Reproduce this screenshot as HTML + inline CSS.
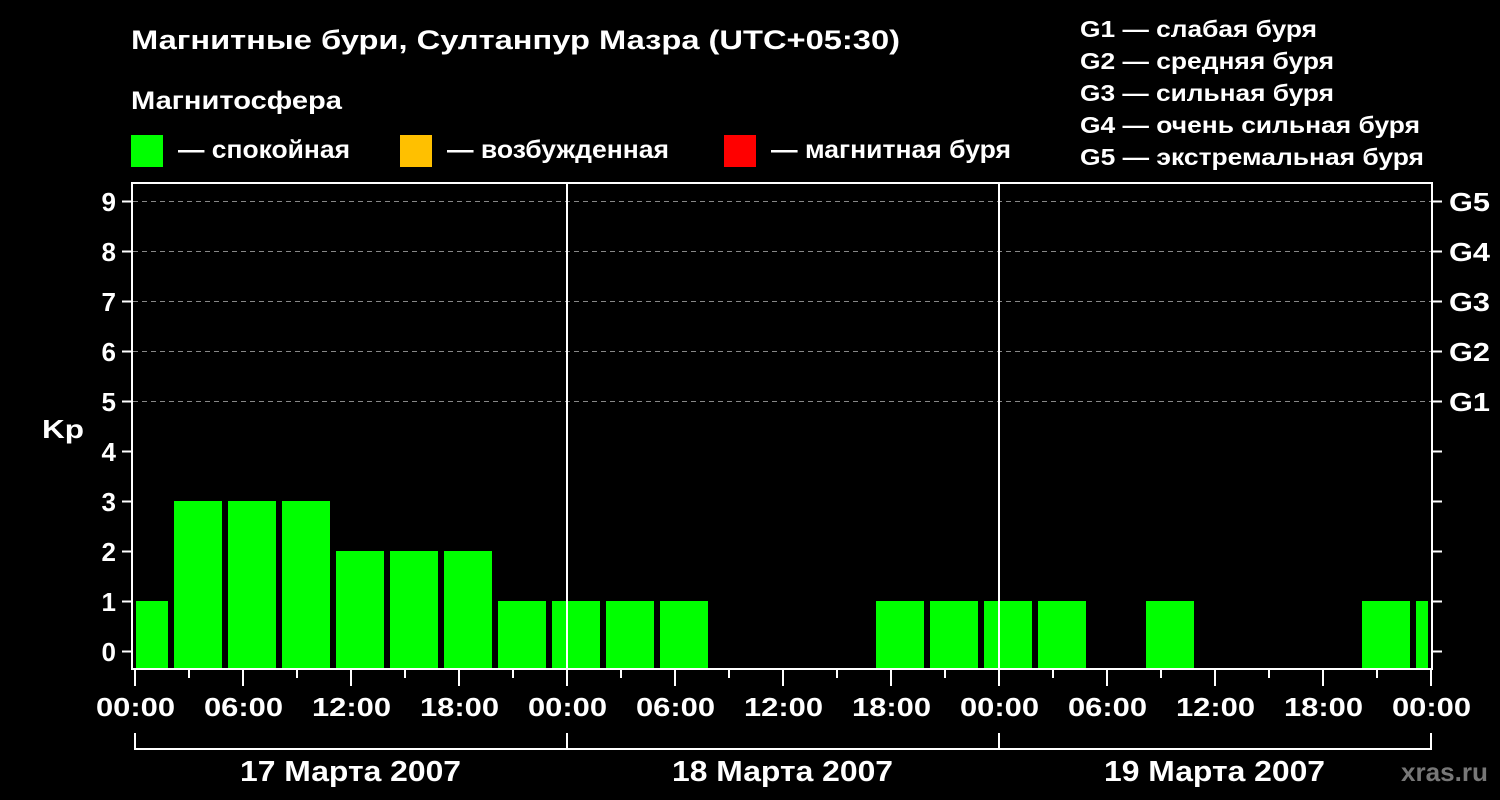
<!DOCTYPE html>
<html><head><meta charset="utf-8"><style>
body{margin:0;background:#000;width:1500px;height:800px;overflow:hidden}
svg{display:block}
text{font-family:"Liberation Sans",sans-serif;font-weight:bold;fill:#fff}
</style></head><body>
<svg width="1500" height="800" xmlns="http://www.w3.org/2000/svg">
<text x="131" y="49" font-size="27" textLength="769" lengthAdjust="spacingAndGlyphs">Магнитные бури, Султанпур Мазра (UTC+05:30)</text>
<text x="131" y="109" font-size="25" textLength="211" lengthAdjust="spacingAndGlyphs">Магнитосфера</text>
<rect x="131" y="135" width="32" height="32" fill="#00ff00"/>
<text x="178" y="158" font-size="25" textLength="172" lengthAdjust="spacingAndGlyphs">— спокойная</text>
<rect x="400" y="135" width="32" height="32" fill="#ffc000"/>
<text x="447" y="158" font-size="25" textLength="222" lengthAdjust="spacingAndGlyphs">— возбужденная</text>
<rect x="724" y="135" width="32" height="32" fill="#ff0000"/>
<text x="771" y="158" font-size="25" textLength="240" lengthAdjust="spacingAndGlyphs">— магнитная буря</text>
<g font-size="23">
<text x="1080" y="37" textLength="237" lengthAdjust="spacingAndGlyphs">G1 — слабая буря</text>
<text x="1080" y="69" textLength="254" lengthAdjust="spacingAndGlyphs">G2 — средняя буря</text>
<text x="1080" y="101" textLength="254" lengthAdjust="spacingAndGlyphs">G3 — сильная буря</text>
<text x="1080" y="133" textLength="340" lengthAdjust="spacingAndGlyphs">G4 — очень сильная буря</text>
<text x="1080" y="165" textLength="344" lengthAdjust="spacingAndGlyphs">G5 — экстремальная буря</text>
</g>
<g stroke="#888" stroke-width="1" stroke-dasharray="5,4">
<line x1="133" y1="201.5" x2="1432" y2="201.5"/>
<line x1="133" y1="251.5" x2="1432" y2="251.5"/>
<line x1="133" y1="301.5" x2="1432" y2="301.5"/>
<line x1="133" y1="351.5" x2="1432" y2="351.5"/>
<line x1="133" y1="401.5" x2="1432" y2="401.5"/>
</g>
<g fill="#00ff00">
<rect x="136" y="601" width="32" height="67"/>
<rect x="174" y="501" width="48" height="167"/>
<rect x="228" y="501" width="48" height="167"/>
<rect x="282" y="501" width="48" height="167"/>
<rect x="336" y="551" width="48" height="117"/>
<rect x="390" y="551" width="48" height="117"/>
<rect x="444" y="551" width="48" height="117"/>
<rect x="498" y="601" width="48" height="67"/>
<rect x="552" y="601" width="48" height="67"/>
<rect x="606" y="601" width="48" height="67"/>
<rect x="660" y="601" width="48" height="67"/>
<rect x="876" y="601" width="48" height="67"/>
<rect x="930" y="601" width="48" height="67"/>
<rect x="984" y="601" width="48" height="67"/>
<rect x="1038" y="601" width="48" height="67"/>
<rect x="1146" y="601" width="48" height="67"/>
<rect x="1362" y="601" width="48" height="67"/>
<rect x="1416" y="601" width="12" height="67"/>
</g>
<g stroke="#fff" stroke-width="2" fill="none">
<rect x="132" y="183" width="1300" height="486"/>
<line x1="567" y1="183" x2="567" y2="669"/>
<line x1="999" y1="183" x2="999" y2="669"/>
</g>
<g stroke="#fff" stroke-width="2">
<path d="M122 201.5h9M122 251.5h9M122 301.5h9M122 351.5h9M122 401.5h9M122 451.5h9M122 501.5h9M122 551.5h9M122 601.5h9M122 651.5h9"/>
<path d="M1433 201.5h9M1433 251.5h9M1433 301.5h9M1433 351.5h9M1433 401.5h9M1433 451.5h9M1433 501.5h9M1433 551.5h9M1433 601.5h9M1433 651.5h9"/>
<path d="M135 670v16M243 670v16M351 670v16M459 670v16M567 670v16M675 670v16M783 670v16M891 670v16M999 670v16M1107 670v16M1215 670v16M1323 670v16M1431 670v16"/>
<path d="M189 670v8M297 670v8M405 670v8M513 670v8M621 670v8M729 670v8M837 670v8M945 670v8M1053 670v8M1161 670v8M1269 670v8M1377 670v8"/>
<path d="M135 733v16h1296v-16M567 733v16M999 733v16"/>
</g>
<g font-size="26" text-anchor="end">
<text x="116" y="211">9</text><text x="116" y="261">8</text><text x="116" y="311">7</text><text x="116" y="361">6</text><text x="116" y="411">5</text><text x="116" y="461">4</text><text x="116" y="511">3</text><text x="116" y="561">2</text><text x="116" y="611">1</text><text x="116" y="661">0</text>
</g>
<text x="42" y="438" font-size="26" textLength="42" lengthAdjust="spacingAndGlyphs">Kp</text>
<g font-size="26">
<text x="1449" y="211" textLength="41" lengthAdjust="spacingAndGlyphs">G5</text><text x="1449" y="261" textLength="41" lengthAdjust="spacingAndGlyphs">G4</text><text x="1449" y="311" textLength="41" lengthAdjust="spacingAndGlyphs">G3</text><text x="1449" y="361" textLength="41" lengthAdjust="spacingAndGlyphs">G2</text><text x="1449" y="411" textLength="41" lengthAdjust="spacingAndGlyphs">G1</text>
</g>
<g font-size="26">
<text x="96" y="716" textLength="79" lengthAdjust="spacingAndGlyphs">00:00</text><text x="204" y="716" textLength="79" lengthAdjust="spacingAndGlyphs">06:00</text><text x="312" y="716" textLength="79" lengthAdjust="spacingAndGlyphs">12:00</text><text x="420" y="716" textLength="79" lengthAdjust="spacingAndGlyphs">18:00</text>
<text x="528" y="716" textLength="79" lengthAdjust="spacingAndGlyphs">00:00</text><text x="636" y="716" textLength="79" lengthAdjust="spacingAndGlyphs">06:00</text><text x="744" y="716" textLength="79" lengthAdjust="spacingAndGlyphs">12:00</text><text x="852" y="716" textLength="79" lengthAdjust="spacingAndGlyphs">18:00</text>
<text x="960" y="716" textLength="79" lengthAdjust="spacingAndGlyphs">00:00</text><text x="1068" y="716" textLength="79" lengthAdjust="spacingAndGlyphs">06:00</text><text x="1176" y="716" textLength="79" lengthAdjust="spacingAndGlyphs">12:00</text><text x="1284" y="716" textLength="79" lengthAdjust="spacingAndGlyphs">18:00</text>
<text x="1392" y="716" textLength="79" lengthAdjust="spacingAndGlyphs">00:00</text>
</g>
<g font-size="29">
<text x="240" y="781" textLength="221" lengthAdjust="spacingAndGlyphs">17 Марта 2007</text>
<text x="672" y="781" textLength="221" lengthAdjust="spacingAndGlyphs">18 Марта 2007</text>
<text x="1104" y="781" textLength="221" lengthAdjust="spacingAndGlyphs">19 Марта 2007</text>
</g>
<text x="1401" y="781" font-size="26" textLength="87" lengthAdjust="spacingAndGlyphs" style="fill:#777">xras.ru</text>
</svg>
</body></html>
